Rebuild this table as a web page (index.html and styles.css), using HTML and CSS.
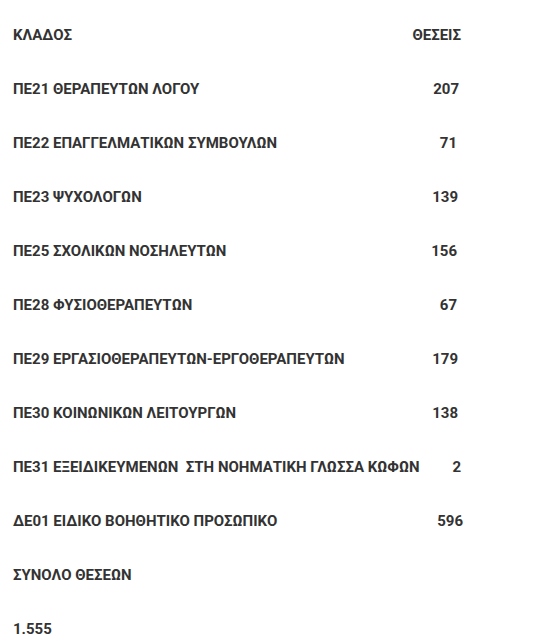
FILE: index.html
```html
<!DOCTYPE html>
<html lang="el">
<head>
<meta charset="utf-8">
<link rel="stylesheet" href="styles.css">
</head>
<body>
<div class="table">
  <div class="row"><span class="name">ΚΛΑΔΟΣ</span><span class="num head">ΘΕΣΕΙΣ</span></div>
  <div class="row"><span class="name">ΠΕ21 ΘΕΡΑΠΕΥΤΩΝ ΛΟΓΟΥ</span><span class="num r1">207</span></div>
  <div class="row"><span class="name">ΠΕ22 ΕΠΑΓΓΕΛΜΑΤΙΚΩΝ ΣΥΜΒΟΥΛΩΝ</span><span class="num r2">71</span></div>
  <div class="row"><span class="name">ΠΕ23 ΨΥΧΟΛΟΓΩΝ</span><span class="num">139</span></div>
  <div class="row"><span class="name">ΠΕ25 ΣΧΟΛΙΚΩΝ ΝΟΣΗΛΕΥΤΩΝ</span><span class="num r2">156</span></div>
  <div class="row"><span class="name">ΠΕ28 ΦΥΣΙΟΘΕΡΑΠΕΥΤΩΝ</span><span class="num r2">67</span></div>
  <div class="row"><span class="name">ΠΕ29 ΕΡΓΑΣΙΟΘΕΡΑΠΕΥΤΩΝ-ΕΡΓΟΘΕΡΑΠΕΥΤΩΝ</span><span class="num">179</span></div>
  <div class="row"><span class="name">ΠΕ30 ΚΟΙΝΩΝΙΚΩΝ ΛΕΙΤΟΥΡΓΩΝ</span><span class="num">138</span></div>
  <div class="row"><span class="name">ΠΕ31 ΕΞΕΙΔΙΚΕΥΜΕΝΩΝ&nbsp; ΣΤΗ ΝΟΗΜΑΤΙΚΗ ΓΛΩΣΣΑ ΚΩΦΩΝ</span><span class="num r3">2</span></div>
  <div class="row"><span class="name">ΔΕ01 ΕΙΔΙΚΟ ΒΟΗΘΗΤΙΚΟ ΠΡΟΣΩΠΙΚΟ</span><span class="num r4">596</span></div>
  <div class="row"><span class="name">ΣΥΝΟΛΟ ΘΕΣΕΩΝ</span></div>
  <div class="row"><span class="name">1.555</span></div>
</div>
</body>
</html>
```
FILE: styles.css
```css
html, body {
  margin: 0;
  padding: 0;
  background: #ffffff;
}
body {
  padding: 8px 0 0 13px;
  font-family: Roboto, "Liberation Sans", sans-serif;
  font-weight: 700;
  font-size: 15px;
  color: #333333;
}
.table {
  width: 445px;
  display: flex;
  flex-direction: column;
}
.row {
  height: 54px;
  display: flex;
  align-items: center;
  justify-content: space-between;
}
.name {
  white-space: nowrap;
}
.num {
  text-align: right;
  white-space: nowrap;
}
.head { margin-right: -3px; }
.r1 { margin-right: -1px; }
.r2 { margin-right: 1px; }
.r3 { margin-right: -3px; }
.r4 { margin-right: -5px; }
```
